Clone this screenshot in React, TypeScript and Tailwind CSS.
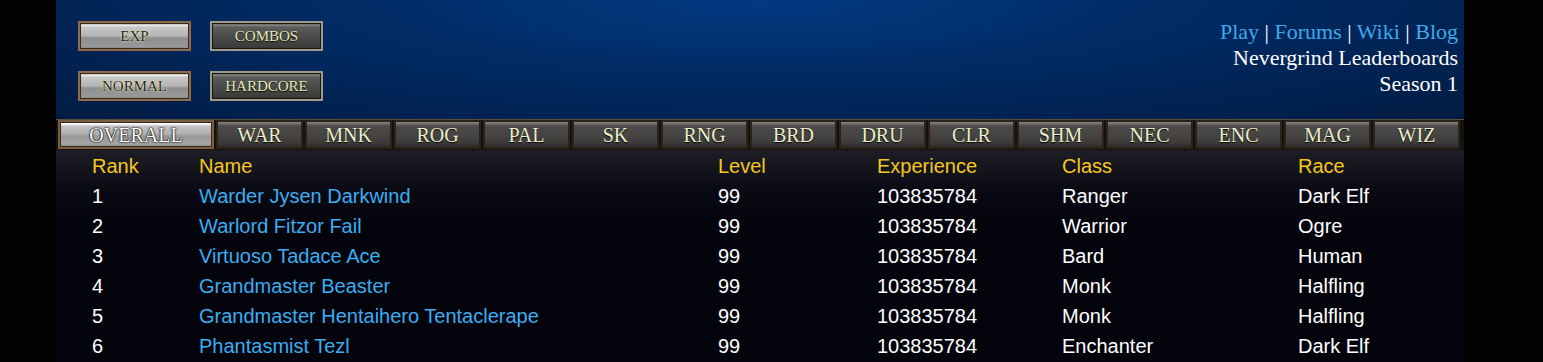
const ROWS = [
  { rank: 1, name: 'Warder Jysen Darkwind', level: 99, exp: 103835784, cls: 'Ranger', race: 'Dark Elf' },
  { rank: 2, name: 'Warlord Fitzor Fail', level: 99, exp: 103835784, cls: 'Warrior', race: 'Ogre' },
  { rank: 3, name: 'Virtuoso Tadace Ace', level: 99, exp: 103835784, cls: 'Bard', race: 'Human' },
  { rank: 4, name: 'Grandmaster Beaster', level: 99, exp: 103835784, cls: 'Monk', race: 'Halfling' },
  { rank: 5, name: 'Grandmaster Hentaihero Tentaclerape', level: 99, exp: 103835784, cls: 'Monk', race: 'Halfling' },
  { rank: 6, name: 'Phantasmist Tezl', level: 99, exp: 103835784, cls: 'Enchanter', race: 'Dark Elf' },
];

const TABS = ['WAR', 'MNK', 'ROG', 'PAL', 'SK', 'RNG', 'BRD', 'DRU', 'CLR', 'SHM', 'NEC', 'ENC', 'MAG', 'WIZ'];

const serif = "font-['Liberation_Serif','Times_New_Roman',serif]";

function ModeButton({ label, active }: { label: string; active?: boolean }) {
  if (active) {
    return (
      <div className="flex h-[30px] w-[113px] items-center justify-center border-2 border-[#8c6c4c] bg-[linear-gradient(to_bottom,#5a4a3a_0px,#f4f4f4_2px,#c8c8c8_4px,#b4b4b4_13px,#8e8e8e_15px,#9a9a9a_24px,#6a6a6a_26px)] shadow-[inset_0_0_0_1px_#3a2a1a]">
        <span className={`${serif} text-[15px] leading-none text-[#24240c] [text-shadow:0_0_2px_#f4f0c8,0_0_1px_#fff]`}>{label}</span>
      </div>
    );
  }
  return (
    <div className="flex h-[30px] w-[113px] items-center justify-center border-2 border-[#a09a88] bg-[linear-gradient(to_bottom,#2a2620_0px,#8a8a88_2px,#5c5c5a_4px,#4a4a48_14px,#3c3c3a_24px,#2a2a28_26px)] shadow-[inset_0_0_0_1px_#1a1610]">
      <span className={`${serif} text-[15px] leading-none text-[#e4ecbc] [text-shadow:0_1px_1px_#000]`}>{label}</span>
    </div>
  );
}

function Tab({ label, active }: { label: string; active?: boolean }) {
  if (active) {
    return (
      <div className="flex h-[29px] w-[156px] items-center justify-center border-2 border-[#7a5c40] bg-[linear-gradient(to_bottom,#e8e8e8_0px,#ffffff_2px,#c4c4c4_4px,#b0b0b0_12px,#9a9a9a_14px,#a4a4a4_22px,#7a7a7a_25px)] shadow-[inset_0_0_0_1px_#3a2a1a]">
        <span className={`${serif} text-[20px] leading-none text-white [text-shadow:0_0_2px_#000,0_0_1px_#000,0_0_1px_#000]`}>{label}</span>
      </div>
    );
  }
  return (
    <div className="flex h-[29px] w-[87px] items-center justify-center border-2 border-[#2a2218] bg-[linear-gradient(to_bottom,#8a8886_0px,#6e6c6a_2px,#4c4a48_4px,#464442_14px,#3a3836_22px,#2c2a28_25px)]">
      <span className={`${serif} text-[20px] leading-none text-[#eaeecc] [text-shadow:0_1px_1px_#000]`}>{label}</span>
    </div>
  );
}

export default function App() {
  return (
    <div className="min-h-[362px] bg-[#030303] pl-[56px]">
      <div className="w-[1408px] bg-black">
        <header className="flex h-[119px] justify-between bg-[radial-gradient(ellipse_70%_140%_at_50%_0%,#023a82_0%,#012c66_40%,#011c44_100%)]">
          <div className="grid grid-cols-[113px_113px] content-start gap-x-[19px] gap-y-[20px] pl-[22px] pt-[21px]">
            <ModeButton label="EXP" active />
            <ModeButton label="COMBOS" />
            <ModeButton label="NORMAL" active />
            <ModeButton label="HARDCORE" />
          </div>
          <div className={`${serif} pr-[6px] pt-[19px] text-right text-[22px] leading-[26px] text-white`}>
            <div>
              <a className="text-[#3eaae8]">Play</a> | <a className="text-[#3eaae8]">Forums</a> |{' '}
              <a className="text-[#3eaae8]">Wiki</a> | <a className="text-[#3eaae8]">Blog</a>
            </div>
            <div>Nevergrind Leaderboards</div>
            <div>Season 1</div>
          </div>
        </header>

        <nav className="flex gap-[2px] border-t border-[#5a5040] bg-[#15120e] px-[2px] pb-[1px]">
          <Tab label="OVERALL" active />
          {TABS.map((t) => (
            <Tab key={t} label={t} />
          ))}
        </nav>

        <div className="h-[212px] bg-[linear-gradient(to_bottom,#1e1e26_0px,#0a0a14_40px,#03030c_80px)] pt-[1px] font-['Liberation_Sans',Arial,sans-serif] text-[20px]">
          <div className="grid h-[30px] grid-cols-[107px_519px_159px_185px_236px_1fr] items-center pl-[36px] text-[#f6c81c]">
            <div>Rank</div>
            <div>Name</div>
            <div>Level</div>
            <div>Experience</div>
            <div>Class</div>
            <div>Race</div>
          </div>
          {ROWS.map((r) => (
            <div
              key={r.rank}
              className="grid h-[30px] grid-cols-[107px_519px_159px_185px_236px_1fr] items-center pl-[36px] text-white"
            >
              <div>{r.rank}</div>
              <div className="text-[#3aaef0]">{r.name}</div>
              <div>{r.level}</div>
              <div>{r.exp}</div>
              <div>{r.cls}</div>
              <div>{r.race}</div>
            </div>
          ))}
        </div>
      </div>
    </div>
  );
}
